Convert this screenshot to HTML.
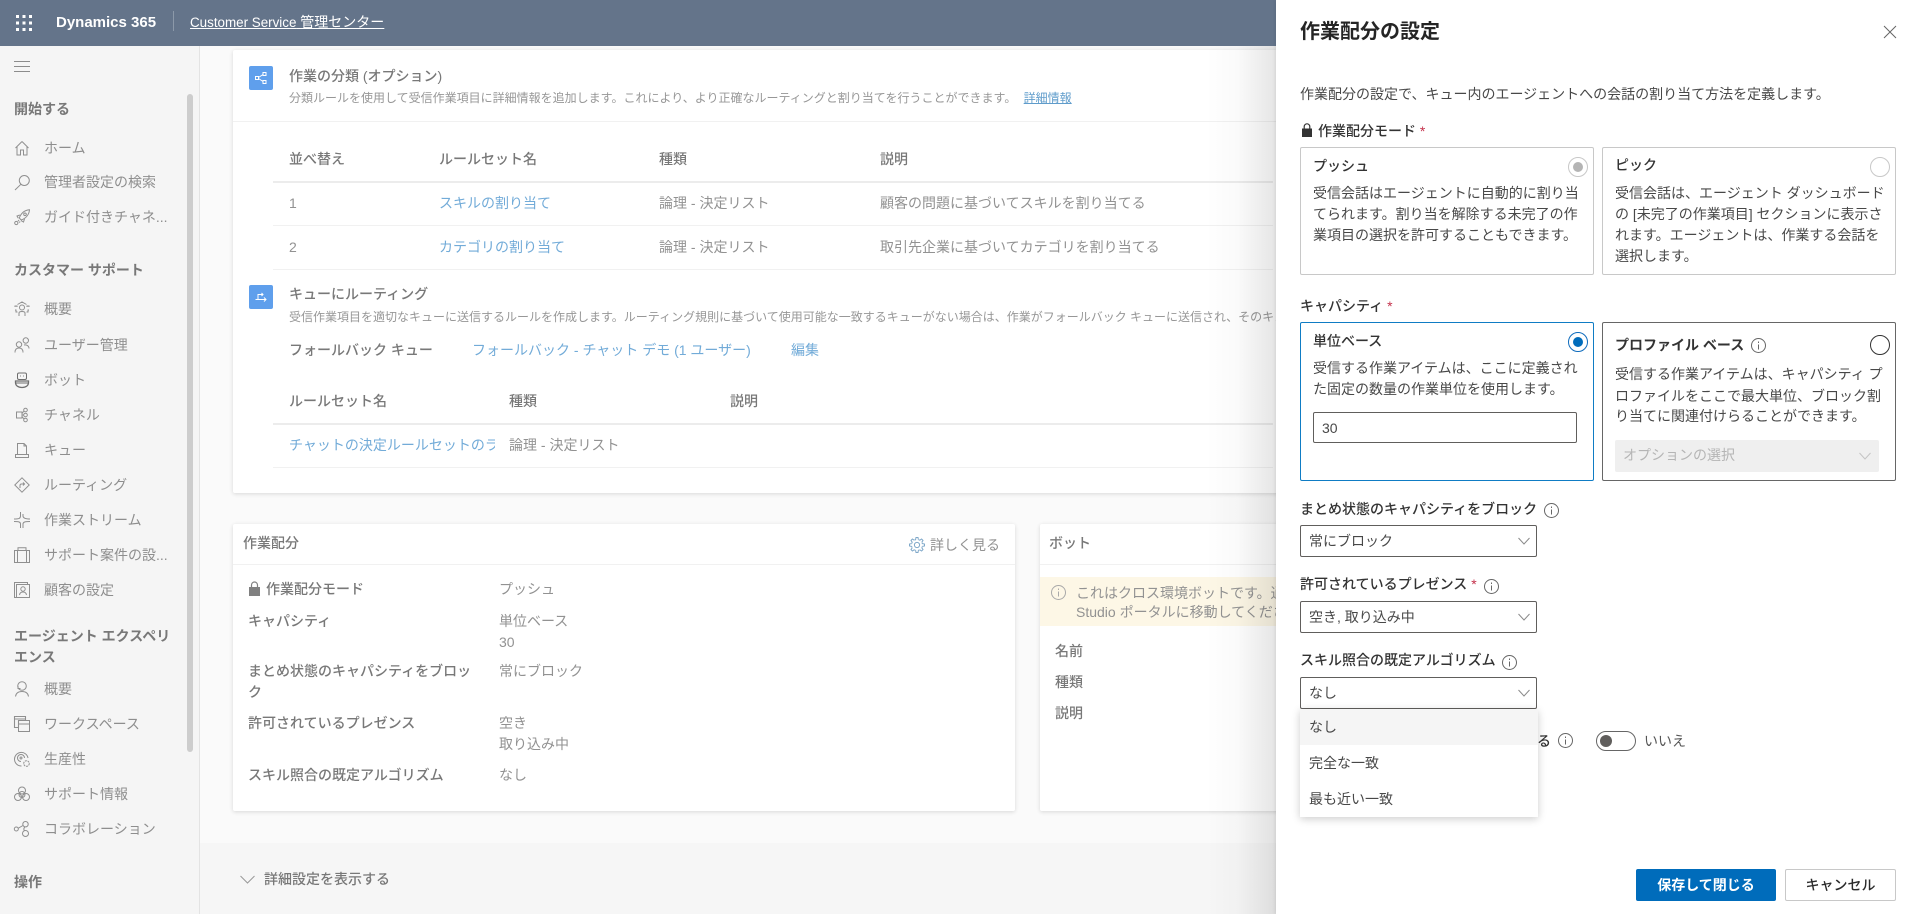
<!DOCTYPE html>
<html lang="ja"><head><meta charset="utf-8"><title>作業配分の設定</title>
<style>
*{box-sizing:border-box}
html,body{margin:0;padding:0;width:1920px;height:914px;overflow:hidden;background:#fafafa}
body{position:relative;font-family:"Liberation Sans","Noto Sans CJK JP",sans-serif;font-size:14px;color:#333}
.a{position:absolute}
.t{position:absolute;white-space:nowrap;line-height:20px;font-size:14px}
.s{color:#8e8e8e}
.h{color:#787878;font-weight:700}
.m{color:#929292}
.l{color:#72abd8}
.d{color:#979797;font-size:12px}
.b{color:#787878;font-weight:500}
svg{position:absolute;overflow:visible;fill:none}
.ic{stroke:#8f8f8f;stroke-width:1;width:16px;height:16px;left:14px}
.card{position:absolute;background:#fff;box-shadow:0 1px 4px rgba(0,0,0,.14);border-radius:2px}
.ln{position:absolute;background:#f1f1f1;height:1px}
.ln2{position:absolute;background:#ececec;height:2px}
.p{color:#484848}
.pb{color:#333;font-weight:700}
.box{position:absolute;border:1px solid #c8c8c8;border-radius:2px;background:#fff}
.sel{position:absolute;border:1px solid #605e5c;border-radius:2px;background:#fff;width:237px;height:32px}
.chev{stroke:#8a8a8a;stroke-width:1;width:12px;height:8px}
.inf{stroke:#666;stroke-width:1;width:15px;height:15px}
.req{color:#c4314b}
</style></head><body>

<!-- main area -->
<div class="a" style="left:200px;top:46px;width:1076px;height:868px;background:#fafafa"></div>
<div class="a" style="left:200px;top:843px;width:1076px;height:71px;background:#f6f6f6"></div>

<!-- sidebar -->
<div class="a" style="left:0;top:46px;width:200px;height:868px;background:#f5f5f5;border-right:1px solid #e3e3e3"></div>
<div class="a" style="left:187px;top:94px;width:6px;height:658px;background:#cdcdcd;border-radius:3px"></div>

<svg style="left:14px;top:61px;width:16px;height:12px;stroke:#8c8c8c;stroke-width:1"><path d="M0 .5H16M0 5.5H16M0 10.5H16"/></svg>

<div class="t h" style="left:14px;top:99px">開始する</div>
<svg class="ic" style="top:140px" viewBox="0 0 16 16"><path d="M8 1.5L1.5 8M8 1.5L14.5 8M3 6.5V15H6.5V10H9.5V15H13V6.5"/></svg>
<div class="t s" style="left:44px;top:138px">ホーム</div>
<svg class="ic" style="top:174px" viewBox="0 0 16 16"><circle cx="10.3" cy="6.5" r="5"/><path d="M7 10.2L1 16"/></svg>
<div class="t s" style="left:44px;top:172px">管理者設定の検索</div>
<svg class="ic" style="top:209px" viewBox="0 0 16 16"><path d="M15.5 .8C10.5 1.2 7 4.5 5.3 9L7.2 11C11.5 9.5 15 6 15.5 .8ZM5.8 6L3 7L4.3 9.3M10.5 10L9.5 13L7.2 11.7"/><circle cx="11" cy="5.3" r="1.3"/><circle cx="2.3" cy="14" r="1.6"/><path d="M5 11L4 12.2M6.2 12.5L5.2 13.6"/></svg>
<div class="t s" style="left:44px;top:207px">ガイド付きチャネ...</div>

<div class="t h" style="left:14px;top:260px">カスタマー サポート</div>
<svg class="ic" style="top:301px" viewBox="0 0 16 16"><circle cx="8" cy="6.5" r="2.5"/><path d="M5 15V12C5 11 6 10.5 8 10.5S11 11 11 12V15M3.5 3.5L8 1L12.5 3.5M1 6V5H3V6M13 6V5H15V6M1 9H2V11H3.5M15 9H14V11H12.5"/></svg>
<div class="t s" style="left:44px;top:299px">概要</div>
<svg class="ic" style="top:337px" viewBox="0 0 16 16"><circle cx="11.8" cy="3.5" r="2.7"/><circle cx="5" cy="7.5" r="2.7"/><path d="M1 15.5C1 12 3 11 5 11S9 12 9 15.5M10 8C12 7.5 15 8.5 15 11.5"/></svg>
<div class="t s" style="left:44px;top:335px">ユーザー管理</div>
<svg class="ic" style="top:372px;stroke:#6e6e6e" viewBox="0 0 16 16"><rect x="3.5" y="1" width="9" height="6.5" rx="1.5"/><path d="M6 4H6.8M9.2 4H10"/><path d="M1.5 9H14.5V10.5C14.5 13.5 12 15.5 8 15.5S1.5 13.5 1.5 10.5Z" stroke-width="1.3"/><path d="M2 11H14"/></svg>
<div class="t s" style="left:44px;top:370px">ボット</div>
<svg class="ic" style="top:407px" viewBox="0 0 16 16"><rect x="2.5" y="5" width="5.5" height="6"/><circle cx="11.5" cy="3" r="1.8"/><circle cx="11.5" cy="8" r="1.8"/><circle cx="11.5" cy="13" r="1.8"/><path d="M8 6.5L10 4M8 8H9.7M8 9.5L10 12"/></svg>
<div class="t s" style="left:44px;top:405px">チャネル</div>
<svg class="ic" style="top:442px" viewBox="0 0 16 16"><path d="M3.5 12.5V1.5H10L12.5 4V12.5M1.5 12.5V15.5H14.5V12.5Z"/><path d="M10 1.5V4H12.5"/></svg>
<div class="t s" style="left:44px;top:440px">キュー</div>
<svg class="ic" style="top:477px" viewBox="0 0 16 16"><path d="M8 .8L15.2 8L8 15.2L.8 8ZM6 11V8.5C6 7.5 6.5 7 7.5 7H10.5M9 5.5L10.5 7L9 8.5"/></svg>
<div class="t s" style="left:44px;top:475px">ルーティング</div>
<svg class="ic" style="top:512px" viewBox="0 0 16 16"><path d="M6.5 0V4C6.5 6.5 5 7 0 7M0 9.5C5 9.5 6.5 10 6.5 12V16M9 2V4C9 6 11 7 16 7M16 9.5C11 9.5 9 10 9 12V16"/></svg>
<div class="t s" style="left:44px;top:510px">作業ストリーム</div>
<svg class="ic" style="top:547px" viewBox="0 0 16 16"><rect x=".5" y="3.5" width="15" height="12"/><path d="M4 3.5V.8H12V3.5M3.5 3.5V15.5M12.5 3.5V15.5"/></svg>
<div class="t s" style="left:44px;top:545px">サポート案件の設...</div>
<svg class="ic" style="top:582px" viewBox="0 0 16 16"><path d="M2.5 15.5H.5V.5H13.5V2.5"/><rect x="2.5" y="2.5" width="13" height="13"/><circle cx="9" cy="7" r="2.2"/><path d="M5.5 13C5.8 10.8 7 10 9 10S12.2 10.8 12.5 13"/></svg>
<div class="t s" style="left:44px;top:580px">顧客の設定</div>

<div class="t h" style="left:14px;top:626px">エージェント エクスペリ</div>
<div class="t h" style="left:14px;top:647px">エンス</div>
<svg class="ic" style="top:681px" viewBox="0 0 16 16"><circle cx="8" cy="5" r="4.3"/><path d="M1.5 15.5C2 12 4.5 10.5 8 10.5S14 12 14.5 15.5M4 5V7.5H6.5"/></svg>
<div class="t s" style="left:44px;top:679px">概要</div>
<svg class="ic" style="top:716px" viewBox="0 0 16 16"><path d="M.5 .5H11.5V4.5H4.5V11.5H.5ZM.5 3H11.5" stroke-width="1.1"/><rect x="4.5" y="4.5" width="11" height="11"/><path d="M4.5 8H15.5"/></svg>
<div class="t s" style="left:44px;top:714px">ワークスペース</div>
<svg class="ic" style="top:751px" viewBox="0 0 16 16"><path d="M14 7A6.8 6.8 0 1 0 7.5 15"/><path d="M10.5 7A3.5 3.5 0 1 0 7 10.5"/><circle cx="7" cy="7" r="1"/><circle cx="12.5" cy="12.5" r="2.8" stroke-dasharray="2 .8"/></svg>
<div class="t s" style="left:44px;top:749px">生産性</div>
<svg class="ic" style="top:786px" viewBox="0 0 16 16"><circle cx="8" cy="4.5" r="3.5"/><circle cx="4" cy="11" r="3.5"/><circle cx="12" cy="11" r="3.5"/><circle cx="8" cy="8.5" r="3"/></svg>
<div class="t s" style="left:44px;top:784px">サポート情報</div>
<svg class="ic" style="top:821px" viewBox="0 0 16 16"><circle cx="2.3" cy="8" r="2"/><circle cx="11.5" cy="3.2" r="2.7"/><circle cx="11.5" cy="12.5" r="3"/><path d="M4.3 7.2L9 4.5M10.8 6C9.5 7.5 9.5 8.5 10.5 9.7"/></svg>
<div class="t s" style="left:44px;top:819px">コラボレーション</div>
<div class="t h" style="left:14px;top:872px">操作</div>

<!-- top card -->
<div class="card" style="left:233px;top:50px;width:1100px;height:443px"></div>
<div class="a" style="left:249px;top:66px;width:24px;height:24px;background:#5f9fec;border-radius:2px"></div>
<svg style="left:255px;top:72px;width:12px;height:12px;stroke:#fff;stroke-width:1" viewBox="0 0 12 12"><rect x=".5" y="4.5" width="3" height="3"/><rect x="8" y=".5" width="3" height="3"/><rect x="8" y="8.5" width="3" height="3"/><path d="M3.5 5.5L8 2.5M3.5 6.5L8 9.5"/></svg>
<div class="t b" style="left:289px;top:66px">作業の分類 (オプション)</div>
<div class="t d" style="left:289px;top:88px">分類ルールを使用して受信作業項目に詳細情報を追加します。これにより、より正確なルーティングと割り当てを行うことができます。 <span style="color:#5f9ccb;text-decoration:underline;margin-left:4px">詳細情報</span></div>
<div class="ln" style="left:233px;top:121px;width:1100px"></div>
<div class="t h" style="left:289px;top:149px;font-weight:500">並べ替え</div>
<div class="t h" style="left:439px;top:149px;font-weight:500">ルールセット名</div>
<div class="t h" style="left:659px;top:149px;font-weight:500">種類</div>
<div class="t h" style="left:880px;top:149px;font-weight:500">説明</div>
<div class="ln2" style="left:273px;top:181px;width:1000px"></div>
<div class="t m" style="left:289px;top:193px">1</div>
<div class="t l" style="left:439px;top:193px">スキルの割り当て</div>
<div class="t m" style="left:659px;top:193px">論理 - 決定リスト</div>
<div class="t m" style="left:880px;top:193px">顧客の問題に基づいてスキルを割り当てる</div>
<div class="ln" style="left:273px;top:225px;width:1000px"></div>
<div class="t m" style="left:289px;top:237px">2</div>
<div class="t l" style="left:439px;top:237px">カテゴリの割り当て</div>
<div class="t m" style="left:659px;top:237px">論理 - 決定リスト</div>
<div class="t m" style="left:880px;top:237px">取引先企業に基づいてカテゴリを割り当てる</div>
<div class="ln" style="left:273px;top:269px;width:1000px"></div>

<div class="a" style="left:249px;top:285px;width:24px;height:24px;background:#5f9fec;border-radius:2px"></div>
<svg style="left:255px;top:291px;width:12px;height:12px;stroke:#fff;stroke-width:1" viewBox="0 0 12 12"><path d="M.5 8.5H11M9 6.5L11 8.5L9 10.5M3 8V3.5H8M6.5 2L8 3.5L6.5 5"/></svg>
<div class="t b" style="left:289px;top:284px">キューにルーティング</div>
<div class="t d" style="left:289px;top:307px">受信作業項目を適切なキューに送信するルールを作成します。ルーティング規則に基づいて使用可能な一致するキューがない場合は、作業がフォールバック キューに送信され、そのキューで処理されます。</div>
<div class="t b" style="left:289px;top:340px">フォールバック キュー</div>
<div class="t l" style="left:472px;top:340px">フォールバック - チャット デモ (1 ユーザー)</div>
<div class="t l" style="left:791px;top:340px">編集</div>
<div class="t h" style="left:289px;top:391px;font-weight:500">ルールセット名</div>
<div class="t h" style="left:509px;top:391px;font-weight:500">種類</div>
<div class="t h" style="left:730px;top:391px;font-weight:500">説明</div>
<div class="ln2" style="left:273px;top:423px;width:1000px"></div>
<div class="t l" style="left:289px;top:435px;width:206px;overflow:hidden">チャットの決定ルールセットのラウンド</div>
<div class="t m" style="left:509px;top:435px">論理 - 決定リスト</div>
<div class="ln" style="left:273px;top:467px;width:1000px"></div>

<!-- left lower card -->
<div class="card" style="left:233px;top:524px;width:782px;height:287px"></div>
<div class="t b" style="left:243px;top:533px">作業配分</div>
<svg style="left:909px;top:537px;width:16px;height:16px;stroke:#7fa8c9;stroke-width:1" viewBox="0 0 16 16">
<g><path d="M6.6 2.6L7 .5H9L9.4 2.6"/><path d="M6.6 2.6L7 .5H9L9.4 2.6" transform="rotate(45 8 8)"/><path d="M6.6 2.6L7 .5H9L9.4 2.6" transform="rotate(90 8 8)"/><path d="M6.6 2.6L7 .5H9L9.4 2.6" transform="rotate(135 8 8)"/><path d="M6.6 2.6L7 .5H9L9.4 2.6" transform="rotate(180 8 8)"/><path d="M6.6 2.6L7 .5H9L9.4 2.6" transform="rotate(225 8 8)"/><path d="M6.6 2.6L7 .5H9L9.4 2.6" transform="rotate(270 8 8)"/><path d="M6.6 2.6L7 .5H9L9.4 2.6" transform="rotate(315 8 8)"/></g>
<circle cx="8" cy="8" r="5.5" stroke-dasharray="1.5 2.82" stroke-dashoffset="-1.5"/><circle cx="8" cy="8" r="2.6"/></svg>
<div class="t m" style="left:930px;top:535px">詳しく見る</div>
<div class="ln" style="left:233px;top:564px;width:782px"></div>
<svg style="left:249px;top:581px;width:11px;height:15px" viewBox="0 0 11 15"><rect x="0" y="6" width="11" height="9" fill="#808080"/><path d="M2.5 6.5V4A3 3 0 0 1 8.5 4V6.5" stroke="#808080" stroke-width="1.2"/></svg>
<div class="t b" style="left:266px;top:579px">作業配分モード</div>
<div class="t m" style="left:499px;top:579px">プッシュ</div>
<div class="t b" style="left:248px;top:611px">キャパシティ</div>
<div class="t m" style="left:499px;top:611px">単位ベース</div>
<div class="t m" style="left:499px;top:632px">30</div>
<div class="t b" style="left:248px;top:661px">まとめ状態のキャパシティをブロッ</div>
<div class="t b" style="left:248px;top:682px">ク</div>
<div class="t m" style="left:499px;top:661px">常にブロック</div>
<div class="t b" style="left:248px;top:713px">許可されているプレゼンス</div>
<div class="t m" style="left:499px;top:713px">空き</div>
<div class="t m" style="left:499px;top:734px">取り込み中</div>
<div class="t b" style="left:248px;top:765px">スキル照合の既定アルゴリズム</div>
<div class="t m" style="left:499px;top:765px">なし</div>

<!-- right lower card -->
<div class="card" style="left:1040px;top:524px;width:300px;height:287px"></div>
<div class="t b" style="left:1049px;top:533px">ボット</div>
<div class="ln" style="left:1040px;top:564px;width:300px"></div>
<div class="a" style="left:1040px;top:577px;width:300px;height:49px;background:#fdf7e6"></div>
<svg class="inf" style="left:1051px;top:585px;stroke:#a9a9a9" viewBox="0 0 15 15"><circle cx="7.5" cy="7.5" r="7"/><path d="M7.5 6.5V11.5M7.5 3.5V5"/></svg>
<div class="t m" style="left:1076px;top:583px">これはクロス環境ボットです。通知の詳細については</div>
<div class="t m" style="left:1076px;top:602px">Studio ポータルに移動してください</div>
<div class="t b" style="left:1055px;top:641px">名前</div>
<div class="t b" style="left:1055px;top:672px">種類</div>
<div class="t b" style="left:1055px;top:703px">説明</div>

<!-- panel shade -->
<div class="a" style="left:1206px;top:46px;width:70px;height:868px;background:linear-gradient(to right,rgba(0,0,0,0),rgba(0,0,0,.02) 45%,rgba(0,0,0,.1))"></div>

<!-- header -->
<div class="a" style="left:0;top:0;width:1276px;height:46px;background:#64748a"></div>
<svg style="left:16px;top:15px;width:16px;height:16px;fill:#fff" viewBox="0 0 16 16"><rect width="3" height="3"/><rect x="6.5" width="3" height="3"/><rect x="13" width="3" height="3"/><rect y="6.5" width="3" height="3"/><rect x="6.5" y="6.5" width="3" height="3"/><rect x="13" y="6.5" width="3" height="3"/><rect y="13" width="3" height="3"/><rect x="6.5" y="13" width="3" height="3"/><rect x="13" y="13" width="3" height="3"/></svg>
<div class="t" style="left:56px;top:12px;color:#fff;font-weight:700;font-size:15px;line-height:22px">Dynamics 365</div>
<div class="a" style="left:173px;top:11px;width:1px;height:20px;background:#8c99a9"></div>
<div class="t" style="left:190px;top:12px;color:#fff;font-size:14px;line-height:20px;text-decoration:underline"><span style="font-size:13.4px">Customer Service</span> 管理センター</div>

<!-- panel -->
<div class="a" style="left:1276px;top:0;width:644px;height:914px;background:#fff;box-shadow:-1px 0 3px rgba(0,0,0,.08)"></div>
<div class="t" style="left:1300px;top:17px;font-size:20px;font-weight:700;color:#252525;line-height:30px">作業配分の設定</div>
<svg style="left:1884px;top:26px;width:12px;height:12px;stroke:#666;stroke-width:1" viewBox="0 0 12 12"><path d="M0 0L12 12M12 0L0 12"/></svg>
<div class="t p" style="left:1300px;top:84px">作業配分の設定で、キュー内のエージェントへの会話の割り当て方法を定義します。</div>

<svg style="left:1302px;top:123px;width:10px;height:14px" viewBox="0 0 10 14"><rect x="0" y="5.5" width="10" height="8.5" fill="#333"/><path d="M2.2 6V3.6A2.8 2.8 0 0 1 7.8 3.6V6" stroke="#333" stroke-width="1.2"/></svg>
<div class="t pb" style="left:1318px;top:121px;font-weight:500">作業配分モード <span class="req">*</span></div>

<div class="box" style="left:1300px;top:147px;width:294px;height:128px"></div>
<div class="t pb" style="left:1313px;top:156px;font-weight:500">プッシュ</div>
<svg style="left:1568px;top:157px;width:20px;height:20px" viewBox="0 0 20 20"><circle cx="10" cy="10" r="9.5" stroke="#c8c8c8"/><circle cx="10" cy="10" r="5" fill="#b4b4b4"/></svg>
<div class="t p" style="left:1313px;top:183px">受信会話はエージェントに自動的に割り当</div>
<div class="t p" style="left:1313px;top:204px">てられます。割り当を解除する未完了の作</div>
<div class="t p" style="left:1313px;top:225px">業項目の選択を許可することもできます。</div>

<div class="box" style="left:1602px;top:147px;width:294px;height:128px"></div>
<div class="t pb" style="left:1615px;top:155px;font-weight:500">ピック</div>
<svg style="left:1870px;top:157px;width:20px;height:20px" viewBox="0 0 20 20"><circle cx="10" cy="10" r="9.5" stroke="#c8c8c8"/></svg>
<div class="t p" style="left:1615px;top:183px">受信会話は、エージェント ダッシュボード</div>
<div class="t p" style="left:1615px;top:204px">の [未完了の作業項目] セクションに表示さ</div>
<div class="t p" style="left:1615px;top:225px">れます。エージェントは、作業する会話を</div>
<div class="t p" style="left:1615px;top:246px">選択します。</div>

<div class="t pb" style="left:1300px;top:296px;font-weight:500">キャパシティ <span class="req">*</span></div>

<div class="box" style="left:1300px;top:322px;width:294px;height:159px;border-color:#0f7cc4"></div>
<div class="t pb" style="left:1313px;top:331px;font-weight:500">単位ベース</div>
<svg style="left:1568px;top:332px;width:20px;height:20px" viewBox="0 0 20 20"><circle cx="10" cy="10" r="9.5" stroke="#0f6cbd"/><circle cx="10" cy="10" r="5" fill="#006cbb"/></svg>
<div class="t p" style="left:1313px;top:358px">受信する作業アイテムは、ここに定義され</div>
<div class="t p" style="left:1313px;top:379px">た固定の数量の作業単位を使用します。</div>
<div class="a" style="left:1313px;top:412px;width:264px;height:31px;border:1px solid #605e5c;border-radius:2px"></div>
<div class="t p" style="left:1322px;top:418px">30</div>

<div class="box" style="left:1602px;top:322px;width:294px;height:159px;border-color:#666"></div>
<div class="t pb" style="left:1615px;top:335px;">プロファイル ベース</div>
<svg class="inf" style="left:1751px;top:338px" viewBox="0 0 15 15"><circle cx="7.5" cy="7.5" r="7"/><path d="M7.5 6.5V11.5M7.5 3.5V5"/></svg>
<svg style="left:1870px;top:335px;width:20px;height:20px" viewBox="0 0 20 20"><circle cx="10" cy="10" r="9.5" stroke="#333"/></svg>
<div class="t p" style="left:1615px;top:364px">受信する作業アイテムは、キャパシティ プ</div>
<div class="t p" style="left:1615px;top:386px">ロファイルをここで最大単位、ブロック割</div>
<div class="t p" style="left:1615px;top:406px">り当てに関連付けらることができます。</div>
<div class="a" style="left:1615px;top:440px;width:264px;height:32px;background:#efefef;border-radius:2px"></div>
<div class="t" style="left:1623px;top:445px;color:#b5b5b5">オプションの選択</div>
<svg class="chev" style="left:1859px;top:452px;stroke:#c4c4c4" viewBox="0 0 12 8"><path d="M.5 1L6 7L11.5 1"/></svg>

<div class="t pb" style="left:1300px;top:499px;font-weight:500">まとめ状態のキャパシティをブロック</div>
<svg class="inf" style="left:1544px;top:503px" viewBox="0 0 15 15"><circle cx="7.5" cy="7.5" r="7"/><path d="M7.5 6.5V11.5M7.5 3.5V5"/></svg>
<div class="sel" style="left:1300px;top:525px"></div>
<div class="t p" style="left:1309px;top:531px">常にブロック</div>
<svg class="chev" style="left:1518px;top:537px" viewBox="0 0 12 8"><path d="M.5 1L6 7L11.5 1"/></svg>

<div class="t pb" style="left:1300px;top:574px;font-weight:500">許可されているプレゼンス <span class="req">*</span></div>
<svg class="inf" style="left:1484px;top:579px" viewBox="0 0 15 15"><circle cx="7.5" cy="7.5" r="7"/><path d="M7.5 6.5V11.5M7.5 3.5V5"/></svg>
<div class="sel" style="left:1300px;top:601px"></div>
<div class="t p" style="left:1309px;top:607px">空き, 取り込み中</div>
<svg class="chev" style="left:1518px;top:613px" viewBox="0 0 12 8"><path d="M.5 1L6 7L11.5 1"/></svg>

<div class="t pb" style="left:1300px;top:650px;font-weight:500">スキル照合の既定アルゴリズム</div>
<svg class="inf" style="left:1502px;top:655px" viewBox="0 0 15 15"><circle cx="7.5" cy="7.5" r="7"/><path d="M7.5 6.5V11.5M7.5 3.5V5"/></svg>
<div class="sel" style="left:1300px;top:677px"></div>
<div class="t p" style="left:1309px;top:683px">なし</div>
<svg class="chev" style="left:1518px;top:689px" viewBox="0 0 12 8"><path d="M.5 1L6 7L11.5 1"/></svg>

<div class="t pb" style="left:1537px;top:731px;font-weight:500">る</div>
<svg class="inf" style="left:1558px;top:733px" viewBox="0 0 15 15"><circle cx="7.5" cy="7.5" r="7"/><path d="M7.5 6.5V11.5M7.5 3.5V5"/></svg>
<div class="a" style="left:1596px;top:731px;width:40px;height:20px;border:1px solid #666;border-radius:10px"></div>
<div class="a" style="left:1600px;top:735px;width:12px;height:12px;background:#605e5c;border-radius:50%"></div>
<div class="t p" style="left:1644px;top:731px;color:#555">いいえ</div>

<div class="a" style="left:1300px;top:709px;width:238px;height:108px;background:#fff;box-shadow:0 2px 8px rgba(0,0,0,.2)"></div>
<div class="a" style="left:1300px;top:709px;width:238px;height:36px;background:#f5f5f5"></div>
<div class="t p" style="left:1309px;top:717px">なし</div>
<div class="t p" style="left:1309px;top:753px">完全な一致</div>
<div class="t p" style="left:1309px;top:789px">最も近い一致</div>

<div class="a" style="left:1636px;top:869px;width:140px;height:32px;background:#006cbb;border-radius:2px;color:#fff;font-weight:700;text-align:center;line-height:32px">保存して閉じる</div>
<div class="a" style="left:1785px;top:869px;width:111px;height:32px;background:#fff;border:1px solid #c8c8c8;border-radius:2px;color:#2b2b2b;font-weight:500;text-align:center;line-height:30px">キャンセル</div>

<!-- bottom strip text -->
<svg style="left:240px;top:875px;width:15px;height:9px;stroke:#999;stroke-width:1" viewBox="0 0 15 9"><path d="M.5 1L7.5 8L14.5 1"/></svg>
<div class="t b" style="left:264px;top:869px">詳細設定を表示する</div>
</body></html>
